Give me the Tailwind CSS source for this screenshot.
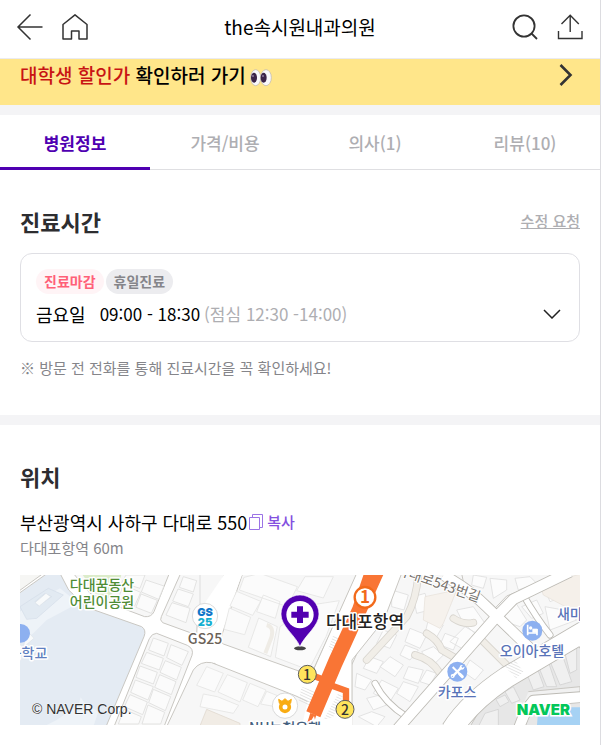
<!DOCTYPE html>
<html lang="ko">
<head>
<meta charset="utf-8">
<meta name="viewport" content="width=device-width, initial-scale=1">
<title>the속시원내과의원</title>
<script src="https://cdn.jsdelivr.net/npm/@tailwindcss/browser@4"></script>
</head>
<body class="bg-white font-['Noto_Sans_CJK_KR','Noto_Sans',sans-serif] text-black">
<div class="min-h-screen w-full border-r border-[#dcdce0] bg-white">

  <header class="grid h-[59px] grid-cols-[1fr_auto_1fr] items-center border-b border-[#ebebf0] px-4 pb-1">
    <div class="flex items-center gap-4">
      <a href="#" aria-label="뒤로"><svg class="block size-7" viewBox="0 0 28 28" fill="none" stroke="#333" stroke-width="1.5"><path d="M14.500 1.500 2 14 14.500 26.500M2 14H26.500"/></svg></a>
      <a href="#" aria-label="홈"><svg class="block size-7" viewBox="0 0 28 28" fill="none" stroke="#333" stroke-width="1.5" stroke-linejoin="round"><path d="M3 11.500 15 1.800 27 11.500V26H19V18H11.500V26H3Z"/></svg></a>
    </div>
    <h1 class="text-[19px] leading-7 font-normal">the속시원내과의원</h1>
    <div class="flex items-center justify-end gap-4">
      <button type="button" aria-label="검색"><svg class="block size-7" viewBox="0 0 28 28" fill="none" stroke="#333" stroke-width="1.8"><circle cx="12" cy="13" r="10.600"/><path d="M19.500 20.500 25 26"/></svg></button>
      <button type="button" aria-label="공유"><svg class="block size-7" viewBox="0 0 28 28" fill="none" stroke="#333" stroke-width="1.4"><path d="M2.500 18V25.500H26V18M14.200 19V2.500M5.500 11 14.200 2.300 22.800 11"/></svg></button>
    </div>
  </header>

  <a href="#" class="flex h-[46px] items-start justify-between bg-[#ffe68a] px-5 pt-[2px]">
    <span class="flex items-center gap-1 text-[19px] leading-7 font-medium"><span><span class="text-[#c81414]">대학생 할인가</span> 확인하러 가기</span>
      <svg class="mt-1 h-5 w-[22px]" viewBox="0 0 66 60" role="img" aria-label="눈"><g stroke="#b9b2b0" stroke-width="2" fill="#f8f8fa"><ellipse cx="17" cy="32" rx="15" ry="24"/><ellipse cx="48" cy="32" rx="16" ry="24"/></g><ellipse cx="12" cy="32" rx="9" ry="15" fill="#3b2448"/><ellipse cx="41" cy="32" rx="9" ry="15" fill="#3b2448"/><circle cx="9" cy="27" r="3" fill="#8d7aa0"/><circle cx="39" cy="27" r="3" fill="#8d7aa0"/></svg>
    </span>
    <svg class="mt-[2px] mr-[7px] h-6 w-[14px]" viewBox="0 0 14 24" fill="none" stroke="#333" stroke-width="2.600"><path d="M1.500 2 11.500 12 1.500 22"/></svg>
  </a>
  <div class="h-[10px] bg-[#f4f4f6]"></div>

  <nav class="grid h-[55px] grid-cols-4 text-center text-[17px] leading-6 font-medium text-[#aeaeb2]">
    <a href="#info" aria-current="page" class="border-b-[3px] border-[#4f00b1] pt-4 font-bold text-[#4f00b1]">병원정보</a>
    <a href="#" class="border-b border-[#dfdfe2] pt-4">가격/비용</a>
    <a href="#" class="border-b border-[#dfdfe2] pt-4">의사(1)</a>
    <a href="#" class="border-b border-[#dfdfe2] pt-4">리뷰(10)</a>
  </nav>

  <main id="info">
    <section class="px-5 pt-[35px] pb-[35px]">
      <div class="flex items-center justify-between">
        <h2 class="text-[22px] leading-8 font-bold text-[#2d2d30]">진료시간</h2>
        <a href="#" class="text-[15px] leading-6 font-medium text-[#aeaeb2] underline">수정 요청</a>
      </div>
      <div class="mt-4 rounded-xl border border-[#dfdfe4] px-[15px] pt-[15px] pb-[13px]">
        <div class="flex gap-[2px] text-sm leading-[25px] font-bold">
          <span class="rounded-full bg-[#fff4f6] px-2 text-[#ff6078]">진료마감</span>
          <span class="rounded-full bg-[#ececef] px-2 text-[#85858a]">휴일진료</span>
        </div>
        <div class="mt-[6px] flex items-center justify-between text-lg leading-7">
          <p class="flex"><span class="mr-[14px]">금요일</span><span class="mr-1 text-[17px]">09:00 - 18:30</span><span class="text-[17px] text-[#aeaeb2]">(점심 12:30 -14:00)</span></p>
          <button type="button" aria-label="요일별 진료시간 펼치기"><svg class="mr-[3px] h-[10px] w-[18px]" viewBox="0 0 18 10" fill="none" stroke="#222" stroke-width="1.500"><path d="M1 1 9 9 17 1"/></svg></button>
        </div>
      </div>
      <p class="mt-[14px] text-[15px] leading-6 text-[#85858a]">※ 방문 전 전화를 통해 진료시간을 꼭 확인하세요!</p>
    </section>
    <div class="h-[10px] bg-[#f4f4f6]"></div>

    <section class="px-5 pt-[35px] pb-5">
      <h2 class="text-[22px] leading-8 font-bold text-[#2d2d30]">위치</h2>
      <div class="mt-4 flex items-center gap-[2px]">
        <p class="text-lg leading-7">부산광역시 사하구 다대로 550</p>
        <button type="button" class="flex items-center gap-1 text-[15px] leading-7 font-medium text-[#8450e0]"><svg class="h-4 w-[14px]" viewBox="0 0 14 16" fill="none" stroke="#9b73e6" stroke-width="1"><path d="M.5 3.500H10.500V15.500H.5ZM3.500 3.500V.5H13.500V13.500H10.500"/></svg>복사</button>
      </div>
      <p class="text-[15px] leading-6 text-[#85858a]">다대포항역 60m</p>

      <div class="mt-[15px] overflow-hidden">
        <svg class="block h-[150px] w-full" viewBox="0 0 560 150" preserveAspectRatio="xMidYMid slice" role="img" aria-label="병원 위치 지도">
          <defs>
            <pattern id="steps" width="8" height="8" patternUnits="userSpaceOnUse" patternTransform="rotate(25)"><path d="M0 4H8" stroke="#d9d9d9" stroke-width="2"/></pattern>
          </defs>
          <rect width="560" height="150" fill="#fff"/>

          <!-- west: school grounds and park -->
          <g transform="scale(.33333) translate(-30 -15)" stroke="#c9c7c2" stroke-width="3" stroke-linejoin="round">
            <path d="M20 75 112 10H150L176 60 230 112 395 170Q410 180 402 200L288 470H20Z" fill="#e4ebf3"/>
            <path d="M20 130 150 55 205 100 110 150 70 190 20 225Z" fill="#eef3f8" stroke="none"/>
            <path d="M30 110 115 55 160 75 80 145 50 148ZM75 95 105 70 125 80 85 108Z" fill="#e2eaf2" stroke="#d3dde8" stroke-width="2"/>
            <path d="M75 98 108 70 122 80 88 108ZM45 210 60 192 72 205 40 232Z" fill="#f8fafb" stroke="#dce3e9" stroke-width="2"/>
            <path d="M140 450 205 405 212 382 225 400 265 425 250 470H100Z" fill="#eef3f8" stroke="none"/>
            <path d="M20 10H100L20 68Z" fill="#f6f6f4"/>
            <path d="M190 10H478L432 125Q424 142 404 140L330 112 240 70Z" fill="#f7f7f7"/>
            <path d="M215 10H335L325 50 295 85 255 70Z" fill="#dcecca" stroke="none"/>
            <path d="M512 10H608L562 150 560 195 458 158Q448 150 454 140Z" fill="#f7f7f7"/>
            <path d="M440 190 532 226Q552 236 546 256L462 470H312L418 206Q426 190 440 190Z" fill="#f7f7f7"/>
            <path d="M615 280Q588 280 578 300L500 470H620Z" fill="#f7f7f7"/>
            <g fill="#fbfbfb" stroke="#dededd" stroke-width="2.500">
              <path d="M348 15H405L390 55 335 38ZM408 30 462 48 446 88 394 66ZM340 45 392 67 374 108 325 85ZM393 72 442 91 424 130 378 112ZM520 20 560 32 550 66 508 52ZM504 57 550 72 535 110 488 93ZM486 98 540 115 528 158 468 135Z"/>
              <path d="M430 204 475 220 462 258 416 240ZM483 224 535 245 516 286 470 263ZM410 247 460 265 448 300 394 280ZM466 272 514 292 500 330 450 307ZM390 288 442 307 430 342 378 322ZM449 314 498 335 484 374 434 352ZM376 330 430 350 414 390 362 367ZM430 358 482 380 466 422 416 398ZM360 374 412 396 398 434 343 410ZM414 405 464 427 452 462H396ZM342 418 394 440 386 462H325ZM555 350 610 330V385L570 400Z"/>
            </g>
            <path d="M590 430 610 420V470H580Z" fill="#f0ebe3"/>
          </g>

          <!-- centre: blocks on both sides of the main road -->
          <g transform="scale(.33333) translate(540 -15)" stroke="#c9c7c2" stroke-width="3" stroke-linejoin="round">
            <path d="M0 10H74L28 128 0 120Z" fill="#f7f7f7" stroke="#dededd"/>
            <path d="M128 10H472L342 296Q334 316 310 308L70 222Q60 216 64 200Z" fill="#f7f7f7"/>
            <path d="M-20 300Q0 272 35 278L288 378 330 398 318 470H-100Z" fill="#f7f7f7"/>
            <path d="M0 120 75 10 128 10 70 155 62 225 0 215Z" fill="#fff" stroke="none"/>
            <g fill="#fbfbfb" stroke="#e4e4e3" stroke-width="2.500">
              <path d="M132 22 180 10 292 50 262 110 118 60ZM110 64 182 94 158 136 90 108ZM190 75 240 95 226 145 170 125ZM315 20H400L370 84 290 62ZM88 114 152 142 134 194 72 178ZM176 144 232 170 212 260 145 232ZM340 104 418 92 378 200 326 300 226 262 240 170Z"/>
              <path d="M20 290 70 310 44 366-10 346ZM82 314 142 338 120 396 54 366ZM150 340 198 360 174 410 128 390ZM10 372 52 380 116 406 100 430 0 410ZM200 364 250 384 226 410 182 402Z"/>
            </g>
            <path d="M20 418 120 460V480H-5Z" fill="#f1ece5" stroke="#ddd5ca" stroke-width="2"/>
            <path d="M200 165Q222 170 215 200L196 250" fill="none" stroke="#efece6" stroke-width="12"/>
          </g>

          <!-- east: blocks, side streets and water -->
          <g transform="scale(.33333) translate(1110 -15)" stroke="#c9c7c2" stroke-width="3" stroke-linejoin="round">
            <path d="M0 10H640V480H-115V285L-15 70Z" fill="#f7f7f7"/>
            <path d="M215 10H520L350 78 310 120 225 60Z" fill="#f7f7f7"/>
            <g fill="#fcfcfc" stroke="#dedede" stroke-width="2.500">
              <path d="M5 60 55 75 42 120 5 110ZM70 80 105 70 120 120 80 130ZM-20 180 20 195 0 235-40 220ZM60 175 110 195 90 235 45 215ZM115 150 160 165 135 210 105 190ZM165 190 205 205 190 240 150 225ZM45 225 85 240 60 270 30 255ZM95 245 130 230 160 255 125 290ZM0 260 40 285 15 320-30 290ZM55 290 100 300 85 340 40 325ZM110 300 140 310 120 345 90 335ZM40 335 85 350 60 395 20 370ZM-25 330 25 355 0 395-50 370ZM180 215 225 170 260 190 215 235ZM240 270 280 300 255 330 220 305ZM200 120 250 110 285 160 255 190 220 160ZM-100 310-55 330-75 360-105 350ZM-60 260-20 275-40 310-80 295ZM-70 385-30 375-10 405-50 420ZM-95 440-55 425-15 440-40 470ZM250 15 290 22 280 55 245 45ZM300 25 350 30 350 60 310 85ZM375 25 420 20 440 40 385 60ZM330 130 375 95 410 150 390 170 345 155ZM395 110 440 90 460 130 425 145ZM465 110 520 120 560 150 480 180ZM460 45 510 40 520 80 480 95Z"/>
            </g>
            <path d="M105 80 200 60 160 160 150 175 100 150Z" fill="#f6f2ed" stroke="#e5dfd8" stroke-width="2"/>
            <path d="M450 45 580 10V110L545 120 460 75Z" fill="#f5f0ea" stroke="#e5dfd8" stroke-width="2"/>
            <g fill="none" stroke-linecap="round">
              <g stroke="#d8d5cf" stroke-width="23"><path d="M85 10Q80 85 50 140L-70 270M110 190Q145 210 155 240L210 272M190 145Q220 165 250 158M75 255Q125 268 150 310M275 210 350 285 400 360 415 385"/></g>
              <g stroke="#f1eee8" stroke-width="18"><path d="M85 10Q80 85 50 140L-70 270M110 190Q145 210 155 240L210 272M190 145Q220 165 250 158M75 255Q125 268 150 310M275 210 350 285 400 360 415 385"/></g>
              <path d="M-45 340Q-15 400 50 440M400 75Q440 145 480 195" stroke="#bdbbb5" stroke-width="21"/>
              <path d="M-45 340Q-15 400 50 440M400 75Q440 145 480 195" stroke="#fff" stroke-width="16"/>
            </g>
            <path d="M240 470Q290 370 390 320L580 215V480H220Z" fill="#e7e7e7"/>
            <g fill="#f0f0f0" stroke="#d2d2d2" stroke-width="2.500"><path d="M318 388 345 375 357 395 330 410ZM345 365 370 350 390 390 365 400ZM285 430 325 418 325 470H265ZM408 305 440 290 462 350 430 360ZM446 290 475 275 500 350 470 350ZM470 250 510 235 545 335 510 345ZM520 230 560 215V300L540 310Z"/></g>
            <path d="M415 365 570 350V395L420 400 375 470" fill="#f1f1f1" stroke="#c9c7c2"/>
            <g fill="none" stroke-linejoin="round">
              <path d="M185 480Q240 395 350 322L590 180" stroke="#bdbbb5" stroke-width="66"/>
              <path d="M20 480 315 145 370 88 540 5M160 15Q240 60 290 110L430 245M570 205 600 250M385 480Q405 420 430 392L590 380" stroke="#bdbbb5" stroke-width="35"/>
              <path d="M185 480Q240 395 350 322L590 180" stroke="#fff" stroke-width="61"/>
              <path d="M20 480 315 145 370 88 540 5M160 15Q240 60 290 110L430 245M570 205 600 250M385 480Q405 420 430 392L590 380" stroke="#fff" stroke-width="30"/>
            </g>
            <path d="M345 290 375 270 400 305 378 325Z" fill="url(#steps)" stroke="none"/>
            <path d="M445 412H590V480H440Z" fill="#a6d2f4" stroke="none"/>
          </g>

          <!-- main road, subway line and exits -->
          <g transform="scale(.33333) translate(540 -15)">
            <path d="M470 10H605L552 150 456 270V470H305L326 380 342 296Z" fill="#fff"/>
            <path d="M470 10 342 296M605 10 552 150 456 270V400" fill="none" stroke="#c9c7c2" stroke-width="3"/>
            <path d="M305 350 350 365 330 410 295 395ZM400 195 420 205 400 245 385 235ZM415 370 430 375 400 440 370 450Z" fill="url(#steps)"/>
            <path d="M325 312 380 332M390 345 438 362V400M340 432 328 470" fill="none" stroke="#f97535" stroke-width="19"/>
            <path d="M492 10H552L500 125 425 290 361 442 319 424 388 262 458 110Z" fill="#f97535"/>
            <path d="M322 470 342 438 350 470Z" fill="#fff"/>
            <g fill="#ffe45c" stroke="#5c5c5c" stroke-width="3"><circle cx="322" cy="313" r="27"/><circle cx="435" cy="418" r="27"/></g>
            <circle cx="495" cy="82" r="31" fill="#fff" stroke="#f26a1b" stroke-width="7"/>
            <ellipse cx="300" cy="235" rx="18" ry="6" fill="#444"/>
            <path d="M300 230C286 195 243 170 243 132A57 57 0 0 1 357 132C357 170 314 195 300 230Z" fill="#5200b0" stroke="#fff" stroke-width="2"/>
            <circle cx="300" cy="134" r="41" fill="#fff"/>
            <path d="M291 109H309V125H326V143H309V159H291V143H274V125H291Z" fill="#5200b0"/>
            <circle cx="15" cy="138" r="38" fill="#fff" stroke="#c8c8c8" stroke-width="2"/>
            <circle cx="255" cy="407" r="38" fill="#fff" stroke="#c8c8c8" stroke-width="2"/>
            <path d="M236 388 246 394 255 386 264 394 274 388 272 400H238Z" fill="#f9ac13" stroke="#f9ac13" stroke-width="3"/>
            <circle cx="255" cy="411" r="13" fill="#fff" stroke="#f9ac13" stroke-width="11"/>
          </g>

          <!-- place pins -->
          <g transform="scale(.33333) translate(1110 -15)" fill="#8db0f0">
            <circle cx="427" cy="182" r="30"/><circle cx="202" cy="305" r="30"/><circle cx="-1108" cy="190" r="28"/>
            <path d="M413 164V196M414 189H442M441 177V196" fill="none" stroke="#fff" stroke-width="5"/><circle cx="422" cy="174" r="5" fill="#fff"/><path d="M427 176H442V188H427Z" fill="#fff"/>
            <path d="M188 291 216 319" fill="none" stroke="#fff" stroke-width="6"/><path d="M214 293 190 317" fill="none" stroke="#fff" stroke-width="7"/><circle cx="216" cy="292" r="7" fill="#fff"/><path d="M216 292 224 284" stroke="#8db0f0" stroke-width="6"/><circle cx="188" cy="318" r="6" fill="#fff"/><circle cx="187" cy="319" r="2" fill="#8db0f0"/><path d="M209 312 217 320" stroke="#fff" stroke-width="9" stroke-linecap="round"/>
          </g>

          <!-- labels -->
          <g text-anchor="middle" stroke="#fff" stroke-width="3" stroke-linejoin="round" paint-order="stroke" class="text-[14px] font-medium">
            <text x="82" y="15" fill="#4f8c35">다대꿈동산</text>
            <text x="82" y="32" fill="#4f8c35">어린이공원</text>
            <text x="8" y="83" fill="#5f7fc0">등학교</text>
            <text x="185" y="69" fill="#6b6258">GS25</text>
            <text x="265" y="158" fill="#44607e">NH농협은행</text>
            <text x="437" y="122" fill="#5873b8">카포스</text>
            <text x="512" y="81" fill="#5873b8">오이아호텔</text>
            <text x="537" y="44" text-anchor="start" fill="#5873b8">새마을금고</text>
            <text x="345" y="53" fill="#222" class="text-[17px]">다대포항역</text>
            <text transform="translate(417 13) rotate(19)" fill="#77736e" stroke-width="2" class="text-[14px] font-normal">다대로543번길</text>
          </g>
          <g text-anchor="middle" fill="#333" class="text-[14px] font-medium">
            <text x="287" y="105">1</text><text x="325" y="140">2</text>
            <text x="345" y="28" fill="#f26a1b" class="text-[17px] font-bold">1</text>
          </g>
          <g text-anchor="middle" class="font-['Inter','Liberation_Sans',sans-serif] text-[11px] font-black">
            <text x="185" y="41" fill="#1077c9">GS</text><text x="185" y="51" fill="#17afd0">25</text>
          </g>
          <text x="12" y="139" fill="#333" stroke="#fff" stroke-opacity=".6" stroke-width="1" paint-order="stroke" class="font-['Liberation_Sans',Arial,sans-serif] text-[14px]">© NAVER Corp.</text>
          <text x="550" y="140" text-anchor="end" fill="#03c75a" stroke="#fff" stroke-width="3" paint-order="stroke" class="font-['Inter','Liberation_Sans',sans-serif] text-[15px] font-black">NAVER</text>
        </svg>
      </div>
    </section>
  </main>
</div>
</body>
</html>
